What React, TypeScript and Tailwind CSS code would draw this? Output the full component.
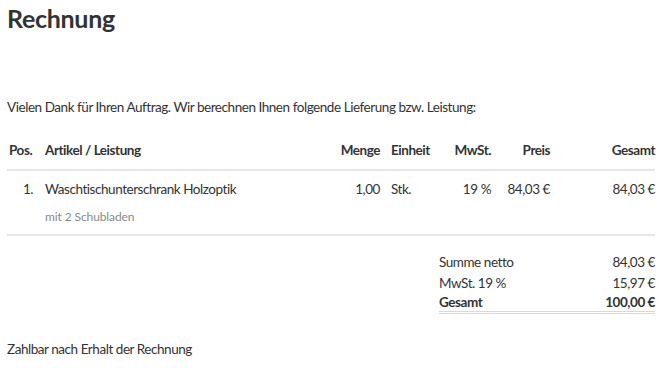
import React from 'react';

const ITEMS = [
  {
    pos: '1.',
    name: 'Waschtischunterschrank Holzoptik',
    note: 'mit 2 Schubladen',
    qty: '1,00',
    unit: 'Stk.',
    vat: '19 %',
    price: '84,03 €',
    total: '84,03 €',
  },
];

const cols = 'grid grid-cols-[32px_1fr_51px_54px_57px_59px_99px]';

const App = () => {
  return (
    <div className="min-h-[368px] bg-white px-[7px] pr-[15px] text-[13.5px] tracking-[-0.45px] text-[#333] font-['Lato','Liberation_Sans',sans-serif]">
      <h1 className="pt-[1px] text-[25px] font-bold leading-[34px] tracking-[-0.3px]">Rechnung</h1>

      <p className="mt-[62px] leading-[20px]">
        Vielen Dank für Ihren Auftrag. Wir berechnen Ihnen folgende Lieferung bzw. Leistung:
      </p>

      <div className={`${cols} mt-[14px] h-[40px] items-center border-b-2 border-[#e6e6e6] font-bold`}>
        <div className="pl-[2px]">Pos.</div>
        <div className="pl-[6px]">Artikel / Leistung</div>
        <div className="pr-[6px] text-right">Menge</div>
        <div className="pl-[5px]">Einheit</div>
        <div className="pr-[6px] text-right">MwSt.</div>
        <div className="pr-[6px] text-right">Preis</div>
        <div className="text-right">Gesamt</div>
      </div>

      {ITEMS.map((item) => (
        <div key={item.pos} className="border-b-2 border-[#e6e6e6] pb-[8px]">
          <div className={`${cols} h-[37px] items-center`}>
            <div className="pr-[6px] text-right">{item.pos}</div>
            <div className="pl-[6px]">{item.name}</div>
            <div className="pr-[6px] text-right">{item.qty}</div>
            <div className="pl-[5px]">{item.unit}</div>
            <div className="pr-[6px] text-right">{item.vat}</div>
            <div className="pr-[6px] text-right">{item.price}</div>
            <div className="text-right">{item.total}</div>
          </div>
          <div className="pl-[38px] text-[12px] leading-[18px] tracking-[-0.1px] text-[#888]">{item.note}</div>
        </div>
      ))}

      <div className="ml-auto mt-[16px] w-[216px]">
        <div className="flex h-[21px] items-center justify-between">
          <span>Summe netto</span>
          <span>84,03 €</span>
        </div>
        <div className="flex h-[21px] items-center justify-between">
          <span>MwSt. 19 %</span>
          <span>15,97 €</span>
        </div>
        <div className="flex h-[20px] items-center justify-between border-b-[3px] border-double border-[#d9d9d9] font-bold">
          <span>Gesamt</span>
          <span>100,00 €</span>
        </div>
      </div>

      <p className="mt-[25px] leading-[20px]">Zahlbar nach Erhalt der Rechnung</p>
    </div>
  );
};

export default App;
